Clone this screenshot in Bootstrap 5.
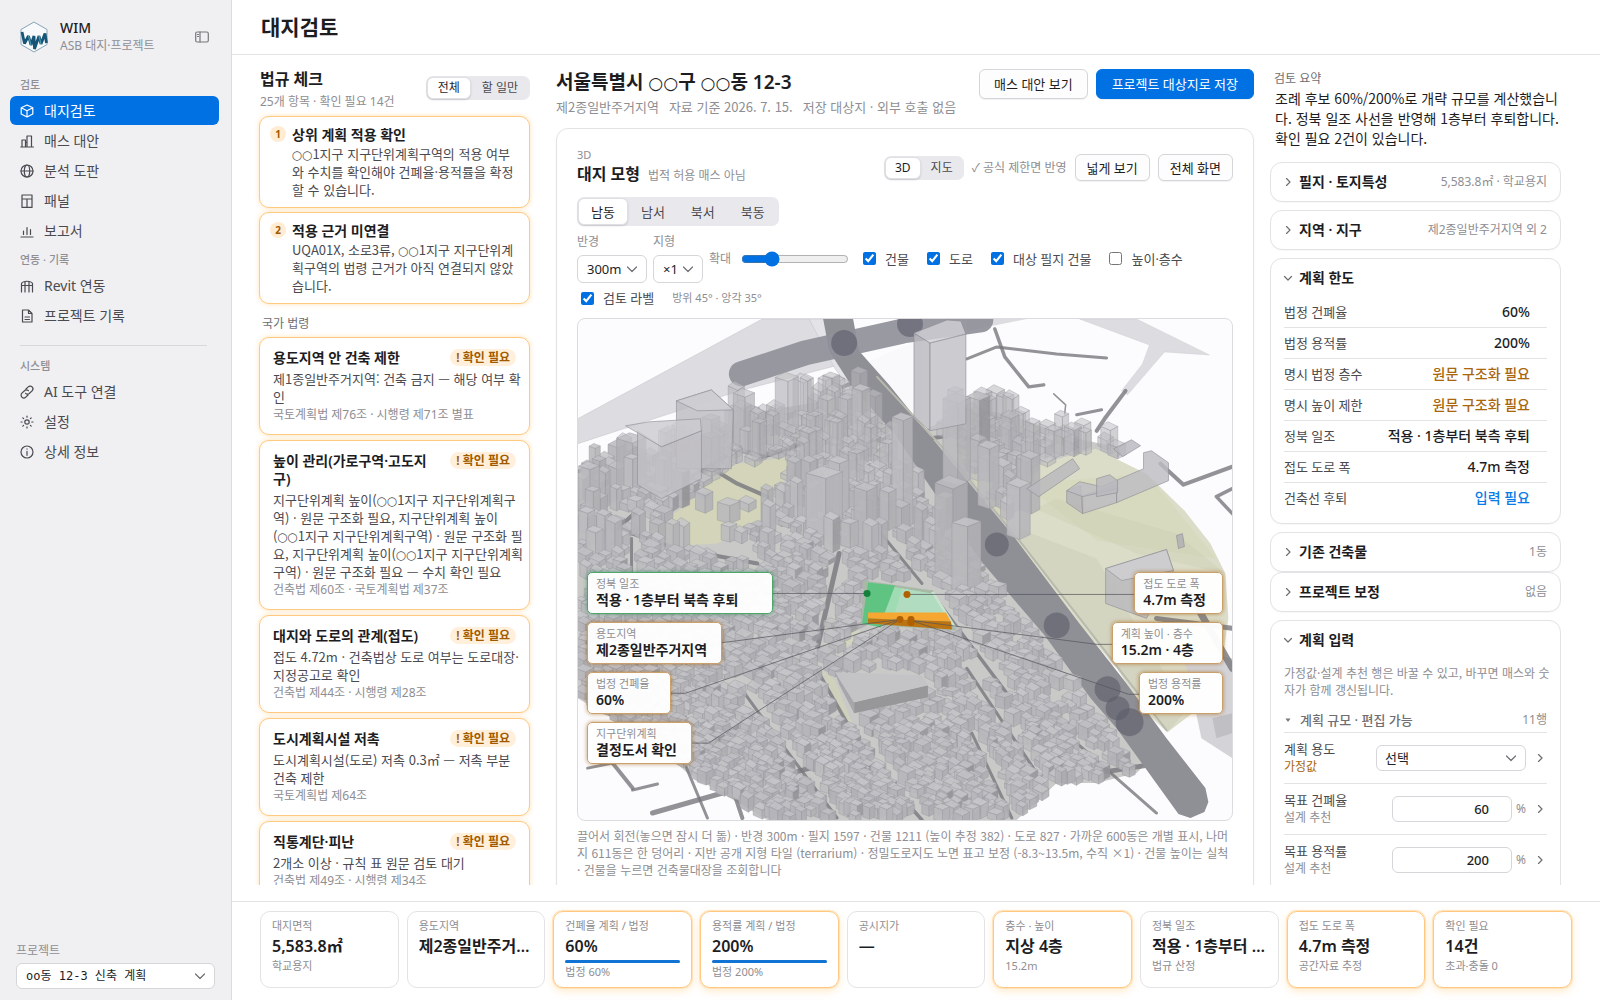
<!DOCTYPE html>
<html lang="ko">
<head>
<meta charset="utf-8">
<meta name="viewport" content="width=device-width, initial-scale=1">
<title>WIM · 대지검토</title>
<link href="https://cdn.jsdelivr.net/npm/bootstrap@5.3.0/dist/css/bootstrap.min.css" rel="stylesheet">
<style>
:root{--ink:#1d1d1f;--ink2:#4a4a4f;--ink3:#8e8e93;--line:#e3e3e6;--blue:#0071e3;--amber:#a05a00;--glow:#ffc981}
body{font-family:"Noto Sans","Noto Sans CJK KR",sans-serif;font-size:13px;line-height:18px;color:var(--ink);background:#fff}
button,input,select{font-family:inherit}
.form-select{--bs-form-select-bg-img:url("data:image/svg+xml,%3csvg xmlns='http://www.w3.org/2000/svg' viewBox='0 0 12 12'%3e%3cpath fill='none' stroke='%236e6e73' stroke-width='1.2' stroke-linecap='round' stroke-linejoin='round' d='M1.500 4 6 8.500 10.500 4'/%3e%3c/svg%3e")}
.shell{height:100vh}
.side{width:232px;background:#f0f0f3;border-right:1px solid #dcdce0;padding:18px 12px 11px 10px}
.side .logo{width:28px;height:32px}
.brand{padding:0 10px;gap:12px;min-height:37px;margin-bottom:22px}
.brand-name{font-size:14px;font-weight:500;line-height:18px}
.brand-sub{font-size:12px;color:var(--ink3);line-height:18px}
.ghost{border:0;background:none;padding:0;line-height:0;color:#77777c}
.side-cap{font-size:11px;line-height:16px;color:var(--ink3);padding-left:10px;font-weight:500;margin-bottom:3px}
.side nav + .side-cap{margin-top:6px}
.side a.item{display:flex;align-items:center;gap:10px;height:29px;margin-bottom:1px;padding:0 10px;border-radius:6px;color:var(--ink2);font-size:14px;line-height:20px;text-decoration:none}
.side a.item.active{background:var(--blue);color:#fff}
.item svg{width:14px;height:14px;flex:none}
.ico{fill:none;stroke:currentColor;stroke-width:1.2;stroke-linecap:round;stroke-linejoin:round}
.rule{border-top:1px solid #d8d8dc;margin:14px 12px 12px 10px}
.proj-box{padding:0 4px 0 6px}
.pick{font-size:12px;line-height:16px;height:26px;padding:0 24px 0 9px;border-color:#d6d6da;border-radius:6px;color:var(--ink);font-family:"DejaVu Sans Mono","Noto Sans CJK KR",monospace;background-position:right 8px center;background-size:12px 12px}
.topbar{height:55px;border-bottom:1px solid var(--line);padding-left:29px}
.topbar h1{font-size:21px;font-weight:600;line-height:30px;margin:0}
.board{display:grid;grid-template-columns:271px minmax(0,1fr) 291px;padding:12px 39px 0 27px;margin-bottom:16px;overflow:hidden}
.col-law,.col-site,.col-sum{min-width:0}
.col-site{margin-left:26px;margin-right:16px}
h2{font-size:16px;font-weight:600;line-height:22px;margin:0}
.dim{color:var(--ink3)}
.t12{font-size:12px;line-height:16px}
.t11{font-size:11px;line-height:16px}
.body-kr{font-family:"Noto Sans CJK KR","Noto Sans",sans-serif}
.ring{font-family:"DejaVu Sans",sans-serif;font-size:.9em;font-weight:400;line-height:1}
.seg{background:#e9e9ed;border-radius:7px;padding:1px}
.seg button{border:1px solid transparent;background:none;border-radius:6px;font-size:12px;line-height:16px;height:22px;padding:0 9px;color:var(--ink2)}
.seg button.on{background:#fff;color:var(--ink);border-color:#e0e0e4;box-shadow:0 1px 2px rgba(0,0,0,.15)}
.seg.big button{height:27px;font-size:13px;padding:0 12px}
.law-head{padding:1px 0 0 1px;margin-bottom:6px}
.law-head .seg{margin-top:8px}
.law-head .seg button{padding:0 10px}
.law{border:1px solid var(--glow);border-radius:10px;background:#fff;padding:11px 13px;margin-bottom:5px;box-shadow:0 0 5px rgba(255,159,10,.3)}
.law.todo{padding:9px 10px 8px 10px;gap:6px;margin-bottom:4px}
.law h3{font-size:14px;font-weight:600;line-height:18px;margin:0}
.law p{color:var(--ink2);margin:3px 0 0;font-size:13px;line-height:18px}
.law p.roomy{margin-right:-8px}
.law.todo p{margin-top:1px}
.law footer{font-size:12px;line-height:17px;color:var(--ink3)}
.num{width:16px;height:16px;border-radius:8px;background:#ffecd2;color:var(--amber);font-size:10px;font-weight:700;line-height:16px;text-align:center;flex:none}
.need{flex:none;background:#ffefdb;color:var(--amber);font-size:12px;font-weight:600;line-height:17px;border-radius:9px;padding:0 6px;height:17px}
.cap{font-size:12px;line-height:16px;color:#6e6e73}
.group-cap{padding:8px 0 5px 3px}
.cap13{font-size:13px;color:#6e6e73;font-weight:500}
.site-head{margin-bottom:12px}
.site-name{font-size:19px;line-height:28px;padding-top:1px}
.sub{gap:10px;font-size:13px;line-height:18px;padding-top:2px}
.key-pair{margin-top:2px}
.key{background:#fdfdfd;border:1px solid #d6d6da;border-radius:6px;font-size:13px;line-height:18px;height:30px;padding:0 14px;color:var(--ink);box-shadow:0 1px 1px rgba(0,0,0,.06)}
.key.go{background:var(--blue);border-color:var(--blue);color:#fff;padding:0 15px}
.key.mini{height:27px;padding:0 11px}
.stage{border:1px solid var(--line);border-radius:12px;padding:17px 20px 20px;box-shadow:0 1px 3px rgba(0,0,0,.04)}
.three{font-size:11px;line-height:17px}
.mini-pick{font-size:13px;line-height:18px;height:28px;padding:0 24px 0 9px;border-color:#d6d6da;border-radius:6px;color:var(--ink);background-position:right 8px center;background-size:12px 12px}
.col-site input[type=checkbox]{width:13px;height:13px;margin:0 9px 0 0;accent-color:var(--blue)}
.col-site input[type=range]{width:108px;accent-color:var(--blue);margin:0}
.opts{gap:6px;margin-top:8px}
.opts.under{margin:6px 0 11px;padding-left:4px;gap:18px}
.opts .dim{color:var(--ink3)}
.opts .above{display:block;margin-bottom:5px}
.checks{gap:18px;margin-left:8px}
.checks label,.under label{color:var(--ink2)}
.scene{position:relative;height:503px;border:1px solid #dcdce0;border-radius:8px;overflow:hidden;background:#fcfcfe}
.scene svg{display:block;width:100%;height:100%}
.tags{position:absolute;top:253px;display:flex;flex-direction:column;gap:8px}
.tags.l{left:9px;align-items:flex-start}.tags.r{right:9px;align-items:flex-end}
.tag{background:rgba(255,255,255,.96);border:1px solid #c9a06b;border-radius:5px;padding:3px 14px 3px 8px;height:42px;min-width:84px;box-shadow:0 0 4px rgba(160,90,0,.6);font-size:14px;font-weight:600;line-height:17px}
.tag span{display:block;font-size:11px;font-weight:400;line-height:15px;color:var(--ink3)}
.tag.ok{border-color:#4fa56c;box-shadow:0 0 4px rgba(30,130,70,.6);padding-right:34px}
.tags.r .tag{padding-right:16px}
.tags.r .tag.wide{padding-right:28px}
.note{font-size:12px;line-height:17px;margin:6px 0 0}
.lead-in{font-size:14px;line-height:20px;margin:1px 2px 14px 5px}
.fold{border:1px solid var(--line);border-radius:12px;padding:0 13px;box-shadow:0 1px 1px rgba(0,0,0,.03);margin-bottom:8px;background:#fff}
.fold.snug{margin-bottom:0}
.fold.inputs{padding-bottom:20px}
.fold h3{font-size:14px;font-weight:600;line-height:20px;margin:0}
.fold .bar{height:38px;gap:7px}
.fold .bar svg,.go-on svg{width:8px;height:8px;color:#6e6e73;flex:none}
.rows{width:100%;margin-bottom:10px}
.rows th{font-weight:400;color:var(--ink2);padding:0}
.rows td{text-align:right;font-size:14px;font-weight:500;padding-right:17px}
.rows tr{height:31px;border-bottom:1px solid var(--line)}
.rows tr:first-child{height:30px}
.rows tr:last-child{border:0}
.rows .warn,.warn{color:#a9660c}.rows .ask{color:#0a7be6}
.hint{font-size:12px;line-height:17px;margin:5px -7px 10px 0}
.subbar{gap:8px;height:25px;border-bottom:1px solid var(--line)}
.field{height:51px;border-bottom:1px solid var(--line)}
.field label{color:var(--ink2);line-height:18px}
.field small{display:block;font-size:12px;line-height:18px}
.field select{width:150px;height:26px;font-size:13px;line-height:18px;padding:0 24px 0 8px;border-color:#d6d6da;border-radius:6px;background-position:right 8px center;background-size:12px 12px}
.field input{width:120px;height:26px;border:1px solid #d6d6da;border-radius:6px;text-align:right;padding:0 22px 0 8px;font-size:13px;font-weight:500;color:var(--ink)}
.unit{font-size:12px;width:14px;padding-left:4px}
.go-on{border:0;background:none;padding:0;width:8px;line-height:0;margin:0 3px 0 10px}
.foot{border-top:1px solid var(--line);padding:9px 28px 12px;display:grid;grid-template-columns:repeat(9,minmax(0,1fr));gap:8px;height:99px}
.stat{border:1px solid var(--line);border-radius:10px;padding:6px 11px;height:77px}
.stat.hot{border-color:var(--glow);box-shadow:0 0 0 1px #ffe3bd,0 3px 8px rgba(255,159,10,.22)}
.stat div{font-size:11px;line-height:16px;color:var(--ink3)}
.stat b{display:block;font-size:16px;font-weight:600;line-height:24px}
.stat .progress{height:3px;margin:2px 0 1px;background:#e3e3e6}
.stat .progress-bar{background:#1173d4}
</style>
</head>
<body>
<div class="shell d-flex overflow-hidden">
<aside class="side d-flex flex-column flex-shrink-0">
  <div class="brand d-flex align-items-center">
    <svg class="logo" viewBox="0 0 28 32"><path d="M14 1 27 8.500V23.500L14 31 1 23.500V8.500Z" fill="#f7f9fb" stroke="#86a5b8" stroke-width="1"/><path d="M2 11 4.500 22.500 8.500 15 11 24 14 15 14.500 28 19 15 21 23 25 12.500 26.500 22" fill="none" stroke="#175577" stroke-width="2.800" stroke-linejoin="bevel"/><path d="M8.500 15 11 24M19 15 21 23" stroke="#4a9ab5" stroke-width="1.200"/></svg>
    <div class="flex-grow-1"><div class="brand-name">WIM</div><div class="brand-sub">ASB 대지·프로젝트</div></div>
    <button class="ghost" aria-label="사이드바 접기"><svg class="ico" width="14" height="12" viewBox="0 0 14 12"><rect x=".7" y="1" width="12.600" height="10" rx="1.500"/><path d="M5 1v10M2.500 3.500h1M2.500 5.500h1"/></svg></button>
  </div>
  <div class="side-cap">검토</div>
  <nav>
    <a class="item active" href="#"><svg class="ico" viewBox="0 0 14 14"><path d="M7 1 12.800 3.800V10L7 13 1.200 10V3.800ZM1.200 3.800 7 6.800 12.800 3.800M7 6.800V13"/></svg>대지검토</a>
    <a class="item" href="#"><svg class="ico" viewBox="0 0 14 14"><path d="M.8 13h12.600M2 13V6h3.500v7M7 13V2h4.500v11M5.500 8.500H7"/></svg>매스 대안</a>
    <a class="item" href="#"><svg class="ico" viewBox="0 0 14 14"><circle cx="7" cy="7" r="6"/><ellipse cx="7" cy="7" rx="2.700" ry="6"/><path d="M1 7h12"/></svg>분석 도판</a>
    <a class="item" href="#"><svg class="ico" viewBox="0 0 14 14"><path d="M2 1h10v12.400H2ZM2 5h10M7 5v8.400"/></svg>패널</a>
    <a class="item" href="#"><svg class="ico" viewBox="0 0 14 14"><path d="M1 13h12M3.500 10.500V7M7 10.500V3.500M10.500 10.500V5.500"/></svg>보고서</a>
  </nav>
  <div class="side-cap">연동 · 기록</div>
  <nav>
    <a class="item" href="#"><svg class="ico" viewBox="0 0 14 14"><path d="M1.500 13V4.500C3 1.500 11 1.500 12.500 4.500V13M1.500 6.500h11M5 13V2.500M9 13V2.500"/></svg>Revit 연동</a>
    <a class="item" href="#"><svg class="ico" viewBox="0 0 14 14"><path d="M2.500 1h6L12 4.500V13H2.500ZM8.500 1v3.500H12M5 8h4.500M5 10.500h4.500"/></svg>프로젝트 기록</a>
  </nav>
  <div class="rule"></div>
  <div class="side-cap">시스템</div>
  <nav>
    <a class="item" href="#"><svg class="ico" viewBox="0 0 14 14"><path d="M6 4 8.200 1.900a2.700 2.700 0 0 1 3.900 3.900L9.500 8.300a2.700 2.700 0 0 1-3.900 0M8 10l-2.200 2.100a2.700 2.700 0 0 1-3.900-3.900L4.500 5.700a2.700 2.700 0 0 1 3.900 0"/></svg>AI 도구 연결</a>
    <a class="item" href="#"><svg class="ico" viewBox="0 0 14 14"><circle cx="7" cy="7" r="2.200"/><path d="M7 1v1.200M7 11.800V13M1 7h1.200M11.800 7H13M2.800 2.800l.8.8M10.400 10.400l.8.8M2.800 11.200l.8-.8M10.400 3.600l.8-.8"/></svg>설정</a>
    <a class="item" href="#"><svg class="ico" viewBox="0 0 14 14"><circle cx="7" cy="7" r="6"/><path d="M7 6.300v4M7 3.900v.2"/></svg>상세 정보</a>
  </nav>
  <div class="proj-box mt-auto">
    <label class="t12 dim mb-1" for="proj">프로젝트</label>
    <select id="proj" class="form-select pick"><option>oo동 12-3 신축 계획</option></select>
  </div>
</aside>
<div class="d-flex flex-column flex-grow-1 overflow-hidden">
<header class="topbar d-flex align-items-center flex-shrink-0"><h1>대지검토</h1></header>
<main class="board flex-grow-1">
<section class="col-law">
  <div class="law-head d-flex justify-content-between align-items-start">
    <div><h2>법규 체크</h2><div class="dim t12 pt-1">25개 항목 · 확인 필요 14건</div></div>
    <div class="seg d-flex"><button class="on">전체</button><button>할 일만</button></div>
  </div>
  <article class="law todo d-flex"><span class="num">1</span><div><h3>상위 계획 적용 확인</h3><p class="body-kr"><span class="ring">○○</span>1지구 지구단위계획구역의 적용 여부와 수치를 확인해야 건폐율·용적률을 확정할 수 있습니다.</p></div></article>
  <article class="law todo d-flex"><span class="num">2</span><div><h3>적용 근거 미연결</h3><p class="body-kr">UQA01X, 소로3류, <span class="ring">○○</span>1지구 지구단위계획구역의 법령 근거가 아직 연결되지 않았습니다.</p></div></article>
  <div class="cap group-cap">국가 법령</div>
  <article class="law"><div class="d-flex justify-content-between gap-3"><h3>용도지역 안 건축 제한</h3><span class="need">! 확인 필요</span></div><p class="body-kr roomy">제1종일반주거지역: 건축 금지 — 해당 여부 확인</p><footer>국토계획법 제76조 · 시행령 제71조 별표</footer></article>
  <article class="law"><div class="d-flex justify-content-between gap-3"><h3>높이 관리(가로구역·고도지구)</h3><span class="need">! 확인 필요</span></div><p class="body-kr roomy">지구단위계획 높이(<span class="ring">○○</span>1지구 지구단위계획구역) · 원문 구조화 필요, 지구단위계획 높이(<span class="ring">○○</span>1지구 지구단위계획구역) · 원문 구조화 필요, 지구단위계획 높이(<span class="ring">○○</span>1지구 지구단위계획구역) · 원문 구조화 필요 — 수치 확인 필요</p><footer>건축법 제60조 · 국토계획법 제37조</footer></article>
  <article class="law"><div class="d-flex justify-content-between gap-3"><h3>대지와 도로의 관계(접도)</h3><span class="need">! 확인 필요</span></div><p class="body-kr roomy">접도 4.72m · 건축법상 도로 여부는 도로대장·지정공고로 확인</p><footer>건축법 제44조 · 시행령 제28조</footer></article>
  <article class="law"><div class="d-flex justify-content-between gap-3"><h3>도시계획시설 저촉</h3><span class="need">! 확인 필요</span></div><p class="body-kr">도시계획시설(도로) 저촉 0.3㎡ — 저촉 부분 건축 제한</p><footer>국토계획법 제64조</footer></article>
  <article class="law"><div class="d-flex justify-content-between gap-3"><h3>직통계단·피난</h3><span class="need">! 확인 필요</span></div><p class="body-kr">2개소 이상 · 규칙 표 원문 검토 대기</p><footer>건축법 제49조 · 시행령 제34조</footer></article>
</section>
<section class="col-site">
  <div class="site-head d-flex justify-content-between align-items-start">
    <div><h2 class="site-name">서울특별시 <span class="ring">○○</span>구 <span class="ring">○○</span>동 12-3</h2><div class="dim sub body-kr d-flex">
      <span>제2종일반주거지역</span><span>자료 기준 2026. 7. 15.</span><span>저장 대상지 · 외부 호출 없음</span></div></div>
    <div class="key-pair d-flex gap-2"><button class="key">매스 대안 보기</button><button class="key go">프로젝트 대상지로 저장</button></div>
  </div>
  <div class="stage">
    <div class="d-flex justify-content-between align-items-center">
      <div><div class="dim three">3D</div><div class="d-flex align-items-baseline gap-2"><h2>대지 모형</h2><span class="dim t12">법적 허용 매스 아님</span></div></div>
      <div class="d-flex align-items-center gap-2 pt-1"><div class="seg d-flex"><button class="on">3D</button><button>지도</button></div><span class="dim t12">✓ 공식 제한면 반영</span><button class="key mini">넓게 보기</button><button class="key mini">전체 화면</button></div>
    </div>
    <div class="d-flex mt-2 pt-1"><div class="seg big d-flex"><button class="on">남동</button><button>남서</button><button>북서</button><button>북동</button></div></div>
    <div class="opts d-flex align-items-center">
      <div><label for="rad" class="t12 dim above">반경</label><select id="rad" class="form-select mini-pick"><option>300m</option></select></div>
      <div><label for="ter" class="t12 dim above">지형</label><select id="ter" class="form-select mini-pick"><option>×1</option></select></div>
      <label class="t12 dim me-1" for="zm">확대</label><input id="zm" type="range" min="0" max="100" value="25">
      <div class="checks d-flex"><label class="d-flex align-items-center"><input type="checkbox" checked>건물</label><label class="d-flex align-items-center"><input type="checkbox" checked>도로</label><label class="d-flex align-items-center"><input type="checkbox" checked>대상 필지 건물</label><label class="d-flex align-items-center"><input type="checkbox">높이·층수</label></div>
    </div>
    <div class="opts under d-flex align-items-center"><label class="d-flex align-items-center"><input type="checkbox" checked>검토 라벨</label><span class="dim t11">방위 45° · 앙각 35°</span></div>
    <div class="scene">
      <svg id="city" viewBox="0 0 656 502" preserveAspectRatio="xMidYMid slice" role="img" aria-label="대지 주변 3D 모형"></svg>
      <div class="tags l"><div class="tag ok"><span>정북 일조</span>적용 · 1층부터 북측 후퇴</div><div class="tag"><span>용도지역</span>제2종일반주거지역</div><div class="tag"><span>법정 건폐율</span>60%</div><div class="tag"><span>지구단위계획</span>결정도서 확인</div></div>
      <div class="tags r"><div class="tag"><span>접도 도로 폭</span>4.7m 측정</div><div class="tag wide"><span>계획 높이 · 층수</span>15.2m · 4층</div><div class="tag"><span>법정 용적률</span>200%</div></div>
    </div>
    <p class="dim note body-kr">끌어서 회전(놓으면 잠시 더 돎) · 반경 300m · 필지 1597 · 건물 1211 (높이 추정 382) · 도로 827 · 가까운 600동은 개별 표시, 나머지 611동은 한 덩어리 · 지반 공개 지형 타일 (terrarium) · 정밀도로지도 노면 표고 보정 (-8.3~13.5m, 수직 ×1) · 건물 높이는 실척 · 건물을 누르면 건축물대장을 조회합니다</p>
  </div>
</section>
<section class="col-sum">
  <div class="cap ps-1 pt-1 mt-n1">검토 요약</div>
  <p class="lead-in body-kr">조례 후보 60%/200%로 개략 규모를 계산했습니다. 정북 일조 사선을 반영해 1층부터 후퇴합니다. 확인 필요 2건이 있습니다.</p>
  <div class="fold"><div class="bar d-flex align-items-center"><svg class="ico" viewBox="0 0 8 8"><path d="M2.500.5 6 4 2.500 7.500"/></svg><h3>필지 · 토지특성</h3><span class="dim ms-auto t12">5,583.8㎡ · 학교용지</span></div></div>
  <div class="fold"><div class="bar d-flex align-items-center"><svg class="ico" viewBox="0 0 8 8"><path d="M2.500.5 6 4 2.500 7.500"/></svg><h3>지역 · 지구</h3><span class="dim ms-auto t12">제2종일반주거지역 외 2</span></div></div>
  <div class="fold"><div class="bar d-flex align-items-center"><svg class="ico" viewBox="0 0 8 8"><path d="M.5 2.500 4 6 7.500 2.500"/></svg><h3>계획 한도</h3></div>
    <table class="rows"><tbody>
      <tr><th>법정 건폐율</th><td>60%</td></tr><tr><th>법정 용적률</th><td>200%</td></tr><tr><th>명시 법정 층수</th><td class="warn">원문 구조화 필요</td></tr><tr><th>명시 높이 제한</th><td class="warn">원문 구조화 필요</td></tr><tr><th>정북 일조</th><td>적용 · 1층부터 북측 후퇴</td></tr><tr><th>접도 도로 폭</th><td>4.7m 측정</td></tr><tr><th>건축선 후퇴</th><td class="ask">입력 필요</td></tr>
    </tbody></table></div>
  <div class="fold snug"><div class="bar d-flex align-items-center"><svg class="ico" viewBox="0 0 8 8"><path d="M2.500.5 6 4 2.500 7.500"/></svg><h3>기존 건축물</h3><span class="dim ms-auto t12">1동</span></div></div>
  <div class="fold"><div class="bar d-flex align-items-center"><svg class="ico" viewBox="0 0 8 8"><path d="M2.500.5 6 4 2.500 7.500"/></svg><h3>프로젝트 보정</h3><span class="dim ms-auto t12">없음</span></div></div>
  <div class="fold inputs"><div class="bar d-flex align-items-center"><svg class="ico" viewBox="0 0 8 8"><path d="M.5 2.500 4 6 7.500 2.500"/></svg><h3>계획 입력</h3></div>
    <p class="dim hint body-kr">가정값·설계 추천 행은 바꿀 수 있고, 바꾸면 매스와 숫자가 함께 갱신됩니다.</p>
    <div class="subbar d-flex align-items-center"><svg width="8" height="8" viewBox="0 0 8 8"><path d="M1.500 2.500h5L4 6Z" fill="#77777c"/></svg><span class="cap13">계획 규모 · 편집 가능</span><span class="dim t12 ms-auto">11행</span></div>
    <div class="field d-flex align-items-center"><label for="use" class="me-auto">계획 용도<small class="warn">가정값</small></label><select id="use" class="form-select"><option>선택</option></select><button class="go-on" aria-label="계획 용도 상세"><svg class="ico" viewBox="0 0 8 8"><path d="M2.500.5 6 4 2.500 7.500"/></svg></button></div>
    <div class="field d-flex align-items-center"><label for="bcr" class="me-auto">목표 건폐율<small class="dim">설계 추천</small></label><input id="bcr" value="60"><span class="unit dim">%</span><button class="go-on" aria-label="목표 건폐율 상세"><svg class="ico" viewBox="0 0 8 8"><path d="M2.500.5 6 4 2.500 7.500"/></svg></button></div>
    <div class="field d-flex align-items-center"><label for="far" class="me-auto">목표 용적률<small class="dim">설계 추천</small></label><input id="far" value="200"><span class="unit dim">%</span><button class="go-on" aria-label="목표 용적률 상세"><svg class="ico" viewBox="0 0 8 8"><path d="M2.500.5 6 4 2.500 7.500"/></svg></button></div>
  </div>
</section>
</main>
<footer class="foot flex-shrink-0">
  <div class="stat"><div>대지면적</div><b>5,583.8㎡</b><div>학교용지</div></div>
  <div class="stat"><div>용도지역</div><b class="text-truncate">제2종일반주거지역</b></div>
  <div class="stat hot"><div>건폐율 계획 / 법정</div><b>60%</b><div class="progress"><div class="progress-bar w-100"></div></div><div>법정 60%</div></div>
  <div class="stat hot"><div>용적률 계획 / 법정</div><b>200%</b><div class="progress"><div class="progress-bar w-100"></div></div><div>법정 200%</div></div>
  <div class="stat"><div>공시지가</div><b>—</b></div>
  <div class="stat hot"><div>층수 · 높이</div><b>지상 4층</b><div>15.2m</div></div>
  <div class="stat"><div>정북 일조</div><b class="text-truncate">적용 · 1층부터 북측 후퇴</b><div>법규 산정</div></div>
  <div class="stat hot"><div>접도 도로 폭</div><b>4.7m 측정</b><div>공간자료 추정</div></div>
  <div class="stat hot"><div>확인 필요</div><b>14건</b><div>초과·충돌 0</div></div>
</footer>
</div>
</div>
<script src="https://cdn.jsdelivr.net/npm/bootstrap@5.3.0/dist/js/bootstrap.bundle.min.js"></script>
<script>
(function(){
  // deterministic noise so the massing model is the same on each load
  let s=20260715; const R=()=>((s=(s*1664525+1013904223)>>>0)/4294967296);
  const out=[];
  const poly=(pts,fill,extra='')=>out.push(`<polygon points="${pts}" fill="${fill}" ${extra}/>`);
  const line=(pts,c,w,o=1)=>out.push(`<polyline points="${pts}" fill="none" stroke="${c}" stroke-width="${w}" stroke-opacity="${o}" stroke-linecap="round" stroke-linejoin="round"/>`);
  const P=t=>t.split(' ').map(q=>q.split(',').map(Number));
  const inside=(x,y,p)=>{let c=false;for(let i=0,j=p.length-1;i<p.length;j=i++){const[a,b]=p[i],[d,e]=p[j];if((b>y)!=(e>y)&&x<(d-a)*(y-b)/(e-b)+a)c=!c}return c};
  const ground='0,170 40,150 90,130 150,110 170,95 290,75 330,120 390,90 430,95 500,120 540,128 545,135 530,150 460,160 432,205 520,330 560,400 585,430 560,455 520,465 480,465 440,502 190,502 110,455 70,420 0,380';
  const east='519,130 570,155 608,192 634,225 649,255 652,300 645,350 620,392 591,414 570,395 540,350 480,280 429,205 446,165 463,145';
  const west='135,158 160,145 207,139 215,150 200,172 185,200 140,225 90,228 70,215 110,185';
  const site='289,258 325,262 358,270 380,312 282,314';
  const hall='255,350 350,352 356,380 278,398';
  // open terrain
  poly('185,0 0,100 0,125 162,72 258,47 245,20 232,0','#dddde1','stroke="#c2c2c8" stroke-width=".5"');
  poly('232,0 258,50 275,72 292,60 258,0','#e4e4e8','stroke="#c2c2c8" stroke-width=".5"');
  poly('292,42 345,20 345,110','#f9f9fc');
  poly('390,12 450,0 390,0','#dddde1');
  poly('503,0 573,26 566,45 545,72 551,76 588,33 633,36 560,0','#dddde1','stroke="#cfcfd4" stroke-width=".5"');
  poly(ground,'#c9c9c8');
  poly(east,'#dcddc8'); poly('429,205 520,240 610,392 591,414','#cfd0bd','opacity=".6"'); poly('446,165 520,222 640,240 570,155','#d6d8bb','opacity=".7"');
  poly('458,190 560,235 649,255 600,215 480,180','#c9cbb0','opacity=".35"');
  poly(west,'#d3d4b9');
  poly('378,120 400,118 425,170 432,205 405,180','#d3d4b9');
  poly('250,300 285,295 282,320 245,345','#d3d4c0');
  poly('243,350 258,362 285,430 270,410','#d0d1bd');
  poly('606,330 656,340 656,440 625,420','#d4d4d8'); poly('636,400 656,395 656,415 640,420','#bfbfc4');
  // minor streets
  [['390,40 420,28 480,35 530,39',3],['418,10 428,38 452,68 467,66',3.500],['549,72 528,100 520,112',4],['500,96 525,91',3],['477,75 489,86 488,95',1.500],
   ['584,145 607,166 656,148',4],['656,170 640,178 656,195',3.500],['0,153 20,145',4],['125,152 160,130 185,138 225,125',5],['100,165 135,150 160,165 190,178',4],
   ['30,195 55,215 100,230 180,245',4],['54,220 54,260',3],['40,210 70,183',4],['300,210 345,265',3],['240,330 262,235',5],['240,352 290,440 345,502',3.500],
   ['160,365 200,420 260,500',3],['354,274 430,375',3.500],['395,415 435,500',3],['250,445 75,495',5],['390,350 470,470',3],['500,425 580,495',3],['520,455 585,445',5],['35,445 55,470',4],['10,450 35,445',3],['55,472 80,466',3],['105,440 130,500',3],['145,440 165,500',4],['292,58 265,68',4],['330,123 365,118',4],['385,190 410,180',4],['580,300 656,310',5],['610,270 656,350',7]]
   .forEach(([p,w])=>line(p,'#77777d',w,.8));
  // trunk roads
  const trunk=[[258,-4],[267,24],[292,60],[335,115],[420,232],[484,310],[531,372],[560,415],[613,482]];
  out.push('<polygon points="246,0 276,0 282,32 312,66 358,123 437,218 502,304 549,364 590,420 629,470 632,484 628,494 614,500 602,496 540,410 514,380 467,316 402,240 318,116 275,68 252,32" fill="#8f8f96"/>');
  out.push('<polyline points="164,55 228,34 326,12 404,1" fill="none" stroke="#90909a" stroke-opacity=".92" stroke-width="25" stroke-linecap="round" stroke-linejoin="round"/>');
  line('300,58 365,128 445,225 590,412','#b9baae',2);
  [[267,24,13],[333,5,13],[420,226,12],[480,307,13],[531,371,13],[541,390,12],[553,404,14]].forEach(([x,y,r])=>out.push(`<circle cx="${x}" cy="${y}" r="${r}" fill="#5c5c69" fill-opacity=".6"/>`));
  const nearTrunk=(x,y)=>{for(let i=1;i<trunk.length;i++){const[a,b]=trunk[i-1],[c,d]=trunk[i];const t=Math.max(0,Math.min(1,((x-a)*(c-a)+(y-b)*(d-b))/((c-a)**2+(d-b)**2)));if(Math.hypot(x-a-t*(c-a),y-b-t*(d-b))<(y<120?20:27))return true}return false};
  const roads=[[[240,330],[262,235]],[[240,352],[345,502]],[[160,365],[260,500]],[[354,274],[430,375]],[[395,415],[435,500]],[[54,220],[54,260]],[[390,350],[470,470]],[[30,195],[180,245]],[[500,425],[580,495]],[[300,210],[345,265]]];
  const nearRoad=(x,y)=>roads.some(([[a,b],[c,d]])=>{const t=Math.max(0,Math.min(1,((x-a)*(c-a)+(y-b)*(d-b))/((c-a)**2+(d-b)**2)));return Math.hypot(x-a-t*(c-a),y-b-t*(d-b))<7});
  // extruded box: centre of the base, half sizes along two skewed axes, height
  const box=(x,y,w,d,h,o=.88)=>{
    const A=[x-w,y+w*.15],B=[x+d*.3,y+w*.15+d*.45],C=[x+w+d*.35,y-w*.05+d*.15],D=[x,y-d*.4];
    const up=p=>[p[0],p[1]-h]; const f=a=>a.map(p=>p.map(v=>v.toFixed(1)).join()).join(' ');
    const g=Math.floor(R()*10), c=n=>`rgb(${n-g},${n-g},${n+4-g})`;
    const st=`stroke="#96959d" stroke-width=".4" fill-opacity="${o}"`;
    poly(f([A,B,up(B),up(A)]),c(188),st); poly(f([B,C,up(C),up(B)]),c(R()<.12?156:181),st); poly(f([up(A),up(B),up(C),up(D)]),c(199),st);
  };
  const G=P(ground),E=P(east),W=P(west),S=P(site),H=P(hall),list=[];
  for(let y=85;y<505;y+=y>400?6.500:9)for(let x=-4;x<600;x+=y>400?8:11){
    const px=x+R()*6+(y*.45)%11,py=y+R()*6;
    if(!inside(px,py,G)||inside(px,py,E)||inside(px,py,S)||inside(px,py,H)||nearTrunk(px,py)||nearRoad(px,py))continue;
    if(inside(px,py,W)&&R()<.94)continue;
    if(R()<.06)continue;
    let h=4+R()*9;
    if(py<235&&R()<.28)h=14+R()*26;
    if(py<205&&px<60&&R()<.5)h=18+R()*20;
    if(py<150&&px<330&&R()<.2)h=18+R()*24;
    if(px>400&&py<200&&R()<.4)h=12+R()*18;
    if(py>400)h=5+R()*9;
    list.push([px,py,(y>400?4:4.500)+R()*3.500,5+R()*6,h,py<160?.6:.9]);
  }
  // landmark towers
  list.push([52,168,13,10,50,.8],[10,190,9,8,44,.8],[165,128,9,9,55,.7],[208,112,10,9,55,.7],[283,120,8,7,52,.7],[324,205,9,8,108,.85],[372,262,14,14,100,.85],[260,195,9,8,55],[245,212,16,12,60],[287,225,10,9,58],[410,185,9,9,60,.85],[452,190,8,9,55,.85],[440,215,10,10,52],[388,272,13,9,70],[150,200,10,8,18],[378,160,12,10,82,.8],[400,150,10,9,74,.8]);
  list.sort((a,b)=>a[1]-b[1]).forEach(b=>box(...b));
  // big translucent slabs
  const sl='stroke="#8d8c94" stroke-width=".6" fill-opacity=".82"';
  poly('337,14 353,24 353,112 337,98','#b9b8be',sl);poly('353,24 389,15 389,105 353,112','#c0bfc6',sl);poly('337,14 370,1 384,2 389,15 353,24','#cfced4',sl);
  poly('99,82 134,71 156,91 154,150 99,150','#bcbbc0',sl);poly('99,82 134,71 156,91 120,92','#d0cfd4',sl);
  poly('60,112 84,128 124,112 124,160 84,180 60,166','#c2c1c6',sl);poly('48,107 84,128 124,112 123,100 72,103','#cccbd0',sl);
  poly('450,170 496,140 503,150 462,178','#b9b8bd',sl);
  poly('490,172 504,167 506,195 490,184','#b3b2b8',sl);poly('506,195 540,184 540,166 506,177','#bcbbc1',sl);poly('490,172 503,163 525,168 567,150 567,134 575,132 592,144 592,162 540,184 540,170 506,178','#bdbcc2',sl);
  poly('520,160 533,156 541,162 541,174 520,178','#b9b8be',sl);
  poly('537,130 555,121 564,127 546,138','#b8b7be',sl);
  poly('529,250 590,231 597,252 570,300 529,285','#b9b8be',sl);poly('529,250 590,231 597,252 545,262','#cfcfd2',sl);
  poly('600,217 606,215 608,228 602,230','#b0afb5',sl);
  poly('258,354 277,384 277,395 262,366','#a6a6ab');poly('277,384 351,367 351,379 277,395','#97979a');poly('258,354 345,357 351,367 277,384','#c4c4c6');
  // subject parcel and proposed mass
  poly('287,262 356,272 380,312 284,306','#a8b9a6');
  poly('292,264 354,275 370,296 290,305','#9fdcb3');poly('291,264 318,267 307,296 304,309 285,305','#5fc381');poly('325,270 354,275 370,295 318,294','#b2dcbf');
  poly('354,274 377,309 379,308 357,273','#c9e3cf');
  poly('291,294 369,294 374,303 291,300','#f5a732');poly('291,300 374,303 375,311 291,305','#bb7411');
  // leader lines
  ['187,275 290,275','140,325 323,301','90,375 108,375 323,301','115,425 131,425 323,301','330,276 560,276','334,302 520,326 540,326','334,302 552,376 565,376'].forEach(p=>line(p,'#55555c',.8,.9));
  out.push('<circle cx="290" cy="275" r="3.500" fill="#15803d"/>');
  [[330,276],[323,301],[334,301],[334,304]].forEach(([x,y])=>out.push(`<circle cx="${x}" cy="${y}" r="3.500" fill="#b06000"/>`));
  document.getElementById('city').innerHTML=out.join('');
})();
</script>
</body>
</html>
